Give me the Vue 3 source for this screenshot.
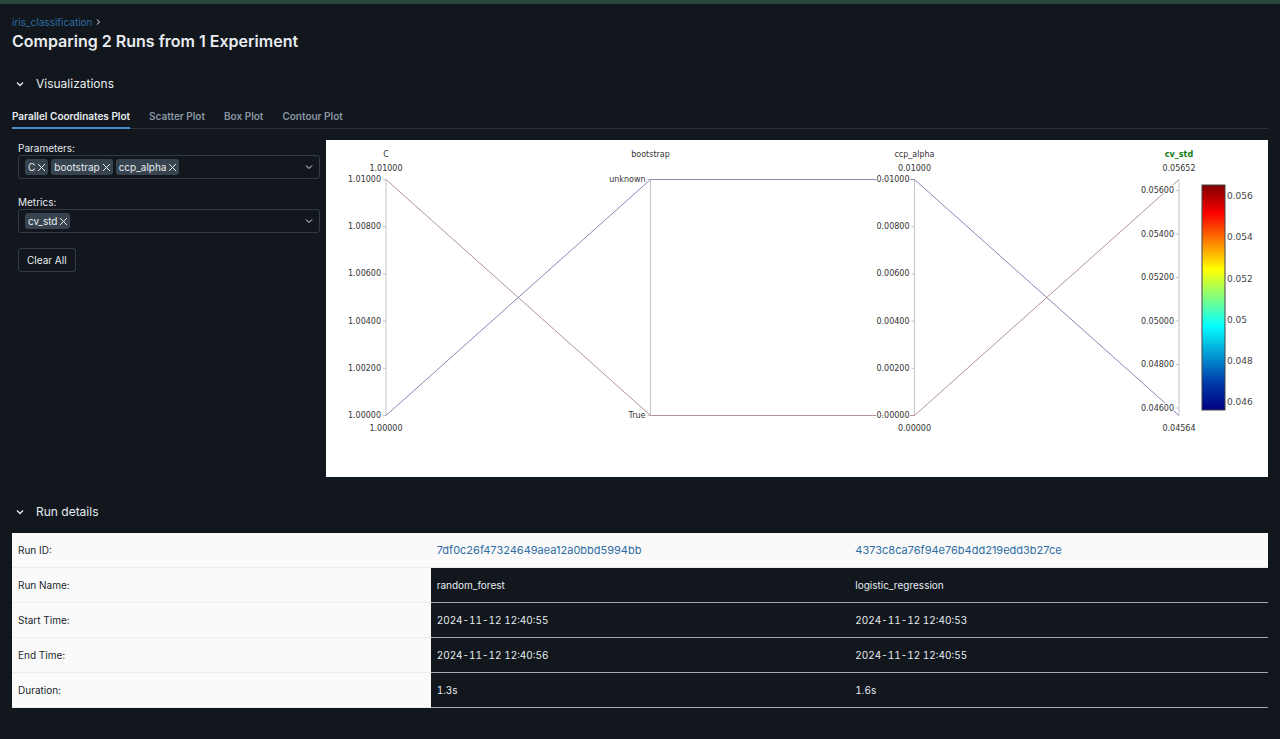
<script setup>
import { ref } from 'vue'

const tabs = ['Parallel Coordinates Plot', 'Scatter Plot', 'Box Plot', 'Contour Plot']
const activeTab = ref(tabs[0])

const fields = ref([
  { id: 'parameters', label: 'Parameters:', values: ['C', 'bootstrap', 'ccp_alpha'] },
  { id: 'metrics', label: 'Metrics:', values: ['cv_std'] },
])
const removeValue = (field, value) => {
  field.values = field.values.filter((v) => v !== value)
}
const clearAll = () => fields.value.forEach((f) => { f.values = [] })

const top = 39.5
const bottom = 275.5
const evenTicks = (labels) =>
  labels.map((text, i) => ({ text, y: top + ((bottom - top) * i) / (labels.length - 1) }))

const axes = [
  {
    name: 'C', x: 60, max: '1.01000', min: '1.00000',
    ticks: evenTicks(['1.01000', '1.00800', '1.00600', '1.00400', '1.00200', '1.00000']),
  },
  { name: 'bootstrap', x: 324.5, max: '', min: '', ticks: evenTicks(['unknown', 'True']) },
  {
    name: 'ccp_alpha', x: 588.5, max: '0.01000', min: '0.00000',
    ticks: evenTicks(['0.01000', '0.00800', '0.00600', '0.00400', '0.00200', '0.00000']),
  },
  {
    name: 'cv_std', x: 853, max: '0.05652', min: '0.04564', metric: true,
    ticks: [
      { text: '0.05600', y: 50.5 },
      { text: '0.05400', y: 94 },
      { text: '0.05200', y: 137.5 },
      { text: '0.05000', y: 181 },
      { text: '0.04800', y: 224.5 },
      { text: '0.04600', y: 268 },
    ],
  },
]

const scaleTicks = [
  { text: '0.056', y: 56 },
  { text: '0.054', y: 97 },
  { text: '0.052', y: 139 },
  { text: '0.05', y: 180 },
  { text: '0.048', y: 221 },
  { text: '0.046', y: 262 },
]

const runIds = ['7df0c26f47324649aea12a0bbd5994bb', '4373c8ca76f94e76b4dd219edd3b27ce']
const rows = [
  { label: 'Run Name:', values: ['random_forest', 'logistic_regression'] },
  { label: 'Start Time:', values: ['2024-11-12 12:40:55', '2024-11-12 12:40:53'] },
  { label: 'End Time:', values: ['2024-11-12 12:40:56', '2024-11-12 12:40:55'] },
  { label: 'Duration:', values: ['1.3s', '1.6s'] },
]
</script>

<template>
  <main class="page">
    <header class="header">
      <nav class="breadcrumb" aria-label="Breadcrumb">
        <a href="#">iris_classification</a>
        <svg width="5" height="8" viewBox="0 0 5 8" aria-hidden="true">
          <path d="M1 1.5l2.5 2.5L1 6.5" fill="none" stroke="currentColor" stroke-width="1" />
        </svg>
      </nav>
      <h1>Comparing 2 Runs from 1 Experiment</h1>
    </header>

    <section class="visualizations">
      <h2>
        <button type="button" class="section-toggle" aria-expanded="true">
          <svg width="8" height="8" viewBox="0 0 8 8" aria-hidden="true">
            <path d="M1 2.5l3 3 3-3" fill="none" stroke="currentColor" stroke-width="1.3" />
          </svg>
          Visualizations
        </button>
      </h2>

      <div class="tabs" role="tablist">
        <button
          v-for="tab in tabs"
          :key="tab"
          type="button"
          role="tab"
          class="tab"
          :class="{ active: tab === activeTab }"
          :aria-selected="tab === activeTab"
          @click="activeTab = tab"
        >{{ tab }}</button>
      </div>

      <div class="plot-layout">
        <form class="controls" @submit.prevent>
          <div v-for="field in fields" :key="field.id" class="field">
            <label :for="field.id">{{ field.label }}</label>
            <div class="select-box">
              <span v-for="value in field.values" :key="value" class="tag">
                {{ value }}
                <button type="button" :aria-label="`Remove ${value}`" @click="removeValue(field, value)">
                  <svg width="9" height="9" viewBox="0 0 9 9" aria-hidden="true">
                    <path d="M1 1l7 7M8 1l-7 7" fill="none" stroke="currentColor" stroke-width="1" />
                  </svg>
                </button>
              </span>
              <input :id="field.id" type="text" role="combobox" aria-expanded="false" autocomplete="off" />
              <svg class="arrow" width="8" height="8" viewBox="0 0 8 8" aria-hidden="true">
                <path d="M1 2.5l3 3 3-3" fill="none" stroke="currentColor" stroke-width="1" />
              </svg>
            </div>
          </div>
          <button type="button" class="clear" @click="clearAll">Clear All</button>
        </form>

        <div class="plot">
          <svg viewBox="0 0 942 337" role="img" aria-label="Parallel coordinates plot">
            <defs>
              <linearGradient id="jet" x1="0" y1="0" x2="0" y2="1">
                <stop offset="0" stop-color="#800000" />
                <stop offset="0.125" stop-color="#fa0000" />
                <stop offset="0.375" stop-color="#ffff00" />
                <stop offset="0.625" stop-color="#05ffff" />
                <stop offset="0.875" stop-color="#003caa" />
                <stop offset="1" stop-color="#000083" />
              </linearGradient>
            </defs>

            <g v-for="axis in axes" :key="axis.name" class="axis">
              <line :x1="axis.x" :x2="axis.x" :y1="top" :y2="bottom" />
              <line v-for="tick in axis.ticks" :key="tick.text" :x1="axis.x - 3" :x2="axis.x" :y1="tick.y" :y2="tick.y" />
            </g>

            <polyline class="run blue" points="60,275.5 324.5,39.5 588.5,39.5 853,275.5" />
            <polyline class="run red" points="60,39.5 324.5,275.5 588.5,275.5 853,39.5" />

            <g v-for="axis in axes" :key="axis.name" class="labels">
              <text :x="axis.x" y="17" class="middle" :class="{ metric: axis.metric }">{{ axis.name }}</text>
              <text :x="axis.x" y="31" class="middle">{{ axis.max }}</text>
              <text
                v-for="tick in axis.ticks"
                :key="tick.text"
                :x="axis.x - 5"
                :y="Math.floor(tick.y) + 3"
                class="end"
              >{{ tick.text }}</text>
              <text :x="axis.x" y="291" class="middle">{{ axis.min }}</text>
            </g>

            <rect x="876" y="45" width="23" height="225" fill="url(#jet)" stroke="#444" stroke-width="1" />
            <text v-for="tick in scaleTicks" :key="tick.text" x="901" :y="tick.y + 3" class="scale">{{ tick.text }}</text>
          </svg>
        </div>
      </div>
    </section>

    <section class="details">
      <h2>
        <button type="button" class="section-toggle" aria-expanded="true">
          <svg width="8" height="8" viewBox="0 0 8 8" aria-hidden="true">
            <path d="M1 2.5l3 3 3-3" fill="none" stroke="currentColor" stroke-width="1.3" />
          </svg>
          Run details
        </button>
      </h2>
      <table>
        <thead>
          <tr>
            <th scope="row">Run ID:</th>
            <th v-for="id in runIds" :key="id" scope="col" class="run-id"><a href="#">{{ id }}</a></th>
          </tr>
        </thead>
        <tbody>
          <tr v-for="row in rows" :key="row.label">
            <th scope="row">{{ row.label }}</th>
            <td v-for="(value, i) in row.values" :key="i">{{ value }}</td>
          </tr>
        </tbody>
      </table>
    </section>
  </main>
</template>

<style>
body {
  background: #11171d;
}
</style>

<style scoped>
* {
  box-sizing: border-box;
}

.page {
  border-top: 4px solid #2b463e;
  padding: 12px;
  color: #e8ecf0;
  font-family: Inter, "Liberation Sans", sans-serif;
  font-size: 10px;
  line-height: 14px;
}

button,
input {
  margin: 0;
  padding: 0;
  border: 0;
  background: none;
  color: inherit;
  font: inherit;
}

button {
  cursor: pointer;
}

a {
  color: #2d6da3;
  text-decoration: none;
}

.breadcrumb {
  display: flex;
  align-items: center;
  gap: 4px;
  height: 12px;
}

h1,
h2 {
  margin: 0;
}

h1 {
  padding-top: 1px;
  font-size: 16px;
  font-weight: 600;
  line-height: 24px;
}

h2 {
  font-size: 12px;
  font-weight: 400;
  line-height: 20px;
}

.visualizations {
  padding-top: 21px;
}

.section-toggle {
  display: flex;
  align-items: center;
  gap: 12px;
  padding-left: 4px;
}

.tabs {
  display: flex;
  gap: 19px;
  margin-top: 14px;
  border-bottom: 1px solid #2b333b;
}

.tab {
  height: 21px;
  margin-bottom: -1px;
  padding-bottom: 3px;
  border-bottom: 2px solid transparent;
  color: #8996a3;
  font-weight: 600;
}

.tab.active {
  border-bottom-color: #4a90cf;
  color: #e8ecf0;
}

.plot-layout {
  display: flex;
  margin-top: 11px;
}

.controls {
  flex: 0 0 314px;
  padding: 1px 6px;
}

.field {
  margin-bottom: 15px;
}

.field + .field {
  margin-top: 16px;
}

.field label {
  display: block;
}

.select-box {
  display: flex;
  align-items: center;
  gap: 3px;
  height: 24px;
  padding: 0 6px;
  border: 1px solid #333c45;
  border-radius: 3px;
}

.tag {
  display: flex;
  align-items: center;
  gap: 2px;
  height: 16px;
  padding: 0 2px 0 3px;
  border-radius: 3px;
  background: #37444f;
}

.tag button {
  display: flex;
}

.select-box input {
  flex: 1;
  width: 0;
  min-width: 0;
  outline: none;
}

.clear {
  height: 24px;
  padding: 0 8px;
  border: 1px solid #333c45;
  border-radius: 3px;
}

.plot {
  flex: 1;
  min-width: 0;
  background: #fff;
}

.plot svg {
  display: block;
  width: 100%;
  font-family: "DejaVu Sans", sans-serif;
}

.axis line {
  stroke: #c4c4c8;
  stroke-width: 1;
}

.run {
  fill: none;
  stroke-width: 1;
}

.run.blue {
  stroke: #8888b8;
}

.run.red {
  stroke: #b89292;
}

.labels text {
  fill: #333;
  font-size: 8px;
}

.labels .middle {
  text-anchor: middle;
}

.labels .end {
  paint-order: stroke;
  stroke: #fff;
  stroke-width: 2;
  text-anchor: end;
}

.labels .metric {
  fill: #107c10;
  font-weight: 700;
}

.plot .scale {
  fill: #444;
  font-size: 9px;
}

.details {
  padding-top: 25px;
}

table {
  width: 100%;
  margin-top: 11px;
  border-spacing: 0;
  table-layout: fixed;
}

th,
td {
  height: 35px;
  padding: 0 6px;
  border-bottom: 1px solid #a4a8ab;
  font-weight: 400;
  text-align: left;
}

td {
  font-variant-numeric: tabular-nums;
}

th {
  border-bottom-color: #ededed;
  background: #fafafa;
  color: #20262c;
}

.run-id {
  font-size: 11px;
}
</style>
